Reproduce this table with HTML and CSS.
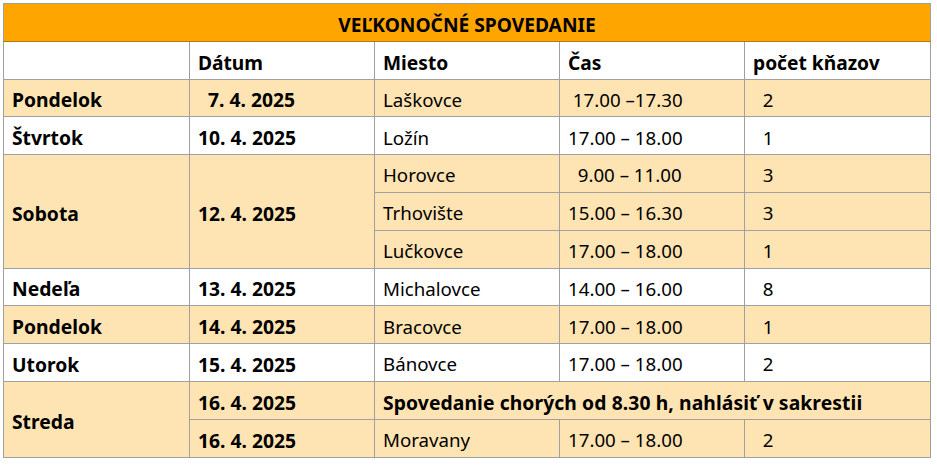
FILE: index.html
```html
<!DOCTYPE html>
<html lang="sk">
<head>
<meta charset="utf-8">
<title>Veľkonočné spovedanie</title>
<link rel="stylesheet" href="styles.css">
</head>
<body>
<table class="plan">
  <colgroup>
    <col class="c1"><col class="c2"><col class="c3"><col class="c4"><col class="c5">
  </colgroup>
  <tr class="title"><th colspan="5">VEĽKONOČNÉ SPOVEDANIE</th></tr>
  <tr class="head"><th></th><th>Dátum</th><th>Miesto</th><th>Čas</th><th>počet kňazov</th></tr>
  <tr class="alt"><td class="b">Pondelok</td><td class="b">&nbsp;&nbsp;7. 4. 2025</td><td>Laškovce</td><td>&nbsp;17.00 –17.30</td><td>&nbsp;&nbsp;2</td></tr>
  <tr><td class="b">Štvrtok</td><td class="b">10. 4. 2025</td><td>Ložín</td><td>17.00 – 18.00</td><td>&nbsp;&nbsp;1</td></tr>
  <tr class="alt"><td class="b mid" rowspan="3">Sobota</td><td class="b mid" rowspan="3">12. 4. 2025</td><td>Horovce</td><td>&nbsp;&nbsp;9.00 – 11.00</td><td>&nbsp;&nbsp;3</td></tr>
  <tr class="alt"><td>Trhovište</td><td>15.00 – 16.30</td><td>&nbsp;&nbsp;3</td></tr>
  <tr class="alt"><td>Lučkovce</td><td>17.00 – 18.00</td><td>&nbsp;&nbsp;1</td></tr>
  <tr><td class="b">Nedeľa</td><td class="b">13. 4. 2025</td><td>Michalovce</td><td>14.00 – 16.00</td><td>&nbsp;&nbsp;8</td></tr>
  <tr class="alt"><td class="b">Pondelok</td><td class="b">14. 4. 2025</td><td>Bracovce</td><td>17.00 – 18.00</td><td>&nbsp;&nbsp;1</td></tr>
  <tr><td class="b">Utorok</td><td class="b">15. 4. 2025</td><td>Bánovce</td><td>17.00 – 18.00</td><td>&nbsp;&nbsp;2</td></tr>
  <tr class="alt"><td class="b mid" rowspan="2">Streda</td><td class="b">16. 4. 2025</td><td class="b wide" colspan="3">Spovedanie chorých od 8.30 h, nahlásiť v sakrestii</td></tr>
  <tr class="alt"><td class="b">16. 4. 2025</td><td>Moravany</td><td>17.00 – 18.00</td><td>&nbsp;&nbsp;2</td></tr>
</table>
</body>
</html>
```

FILE: styles.css
```css
html, body {
  margin: 0;
  padding: 0;
  background: #ffffff;
}
body {
  padding: 3px;
  font-family: "Noto Sans", "Liberation Sans", sans-serif;
  font-size: 18.7px;
  color: #000;
}
.plan {
  border-collapse: collapse;
  table-layout: fixed;
  width: 927px;
  border: 1px solid #a6a6a6;
}
.c1 { width: 186px; }
.c2 { width: 185px; }
.c3 { width: 185px; }
.c4 { width: 185px; }
.c5 { width: 186px; }
.plan th, .plan td {
  height: 37.8px;
  padding: 4px 8px 0 8px;
  border: 1px solid #a0a0a0;
  text-align: left;
  vertical-align: middle;
  white-space: nowrap;
  font-weight: normal;
  box-sizing: border-box;
  line-height: 1.2;
}
.plan .title th {
  background: #ffa500;
  text-align: center;
  font-weight: bold;
  font-size: 19.2px;
  border-bottom-color: #b07a10;
}
.plan .head th {
  font-weight: bold;
  font-size: 19.2px;
  background: #fff;
}
.plan tr.alt td {
  background: #ffe4b3;
}
.plan td.b {
  font-weight: bold;
  font-size: 19.3px;
}
.plan td.wide {
  letter-spacing: 0.1px;
}
```
